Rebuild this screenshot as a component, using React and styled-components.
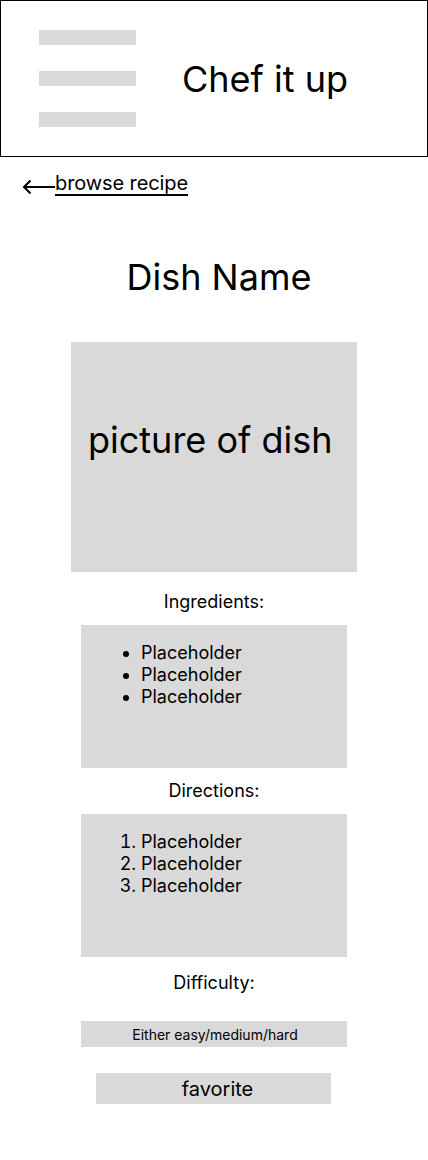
import React from 'react';
import styled, { createGlobalStyle } from 'styled-components';

const GlobalStyle = createGlobalStyle`
  body {
    margin: 0;
    background: #fff;
    font-family: Inter, "Noto Sans", sans-serif;
    color: #000;
  }
`;

const Page = styled.div`
  width: 428px;
  min-height: 1160px;
`;

const Header = styled.header`
  box-sizing: border-box;
  height: 157px;
  border: 1px solid #000;
  display: flex;
  align-items: center;
  padding-left: 38px;
`;

const Burger = styled.div`
  display: flex;
  flex-direction: column;
  gap: 26px;
`;

const Bar = styled.span`
  display: block;
  width: 97px;
  height: 15px;
  background: #d9d9d9;
`;

const Brand = styled.h1`
  margin: 0 0 0 46px;
  font-size: 36px;
  font-weight: 400;
`;

const BackLink = styled.a`
  display: flex;
  align-items: center;
  margin: 14px 0 0 22px;
  width: fit-content;
  color: #000;
  text-decoration: none;
  font-size: 20px;
  line-height: 24px;
`;

const Arrow = styled.svg`
  margin-top: 8px;
`;

const LinkText = styled.span`
  text-decoration: underline;
  text-underline-offset: 4px;
  text-decoration-thickness: 1.5px;
  letter-spacing: -0.1px;
`;

const Main = styled.main`
  display: flex;
  flex-direction: column;
  align-items: center;
`;

const DishName = styled.h2`
  margin: 60px 0 0 10px;
  font-size: 36px;
  font-weight: 400;
  line-height: 44px;
`;

const Picture = styled.div`
  box-sizing: border-box;
  width: 286px;
  height: 230px;
  margin: 43px 0 0 0;
  background: #d9d9d9;
  display: flex;
  align-items: center;
  padding: 0 0 34px 17px;
  font-size: 36px;
`;

const Label = styled.div`
  margin-top: ${(p) => p.$top || 12}px;
  font-size: 18px;
  line-height: 22px;
`;

const Box = styled.div`
  box-sizing: border-box;
  width: 266px;
  height: 143px;
  margin-top: 12px;
  background: #d9d9d9;
  padding-top: 17px;
  font-size: 18px;
  line-height: 22px;
`;

const Bullets = styled.ul`
  margin: 0;
  padding-left: 60px;
`;

const Numbers = styled.ol`
  margin: 0;
  padding-left: 60px;
`;

const Pill = styled.div`
  box-sizing: border-box;
  width: ${(p) => p.$w}px;
  height: ${(p) => p.$h}px;
  margin-top: ${(p) => p.$top}px;
  margin-right: ${(p) => p.$nudge || 0}px;
  background: #d9d9d9;
  display: flex;
  align-items: center;
  justify-content: center;
  padding-left: ${(p) => p.$shift || 0}px;
  font-size: ${(p) => p.$size}px;
`;

const items = ['Placeholder', 'Placeholder', 'Placeholder'];

export default function App() {
  return (
    <Page>
      <GlobalStyle />
      <Header>
        <Burger>
          <Bar />
          <Bar />
          <Bar />
        </Burger>
        <Brand>Chef it up</Brand>
      </Header>

      <BackLink href="#">
        <Arrow width="33" height="16" viewBox="0 0 33 16" fill="none" stroke="#000" strokeWidth="2">
          <path d="M2 8H33" />
          <path d="M8.5 1.5L2 8L8.5 14.5" />
        </Arrow>
        <LinkText>browse recipe</LinkText>
      </BackLink>

      <Main>
        <DishName>Dish Name</DishName>
        <Picture>picture of dish</Picture>

        <Label $top={19}>Ingredients:</Label>
        <Box>
          <Bullets>
            {items.map((t, i) => (
              <li key={i}>{t}</li>
            ))}
          </Bullets>
        </Box>

        <Label>Directions:</Label>
        <Box>
          <Numbers>
            {items.map((t, i) => (
              <li key={i}>{t}</li>
            ))}
          </Numbers>
        </Box>

        <Label $top={15}>Difficulty:</Label>
        <Pill $w={266} $h={26} $top={27} $size={14} $shift={2}>Either easy/medium/hard</Pill>
        <Pill $w={235} $h={31} $top={26} $size={20} $shift={8} $nudge={1}>favorite</Pill>
      </Main>
    </Page>
  );
}
